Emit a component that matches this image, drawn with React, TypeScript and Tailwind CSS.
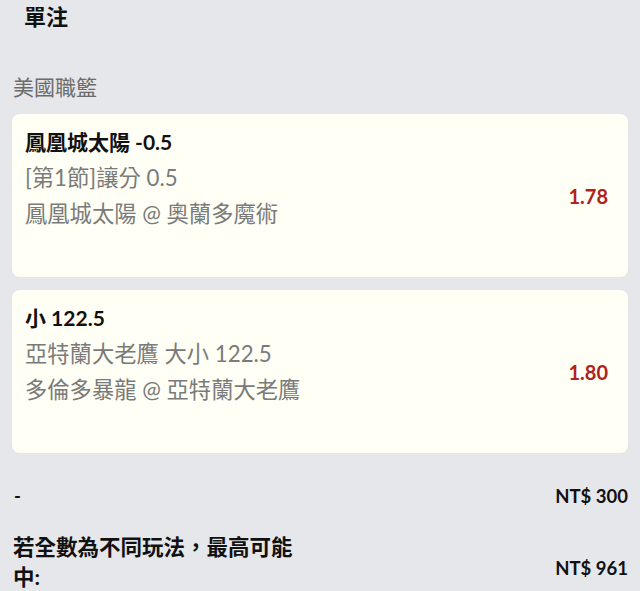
const bets = [
  {
    title: "鳳凰城太陽 -0.5",
    market: "[第1節]讓分 0.5",
    match: "鳳凰城太陽 @ 奧蘭多魔術",
    odds: "1.78",
  },
  {
    title: "小 122.5",
    market: "亞特蘭大老鷹 大小 122.5",
    match: "多倫多暴龍 @ 亞特蘭大老鷹",
    odds: "1.80",
  },
];

export default function App() {
  return (
    <div className="min-h-screen bg-[#e6e7ea] px-3 font-['Lato','Noto_Sans_CJK_TC',sans-serif] text-[#111]">
      <div className="h-[34px] pl-3 text-[22px] leading-[34px] font-bold">單注</div>

      <div className="mt-[35px] mb-[9px] pl-[1px] text-[21px] leading-[36px] text-[#6b6b6b]">美國職籃</div>

      <div className="flex flex-col gap-[13px]">
        {bets.map((b) => (
          <div
            key={b.title}
            className="flex h-[163px] items-center justify-between rounded-lg bg-[#fffff6] pl-[13px] pr-5"
          >
            <div className="self-start pt-[10px] leading-[36px]">
              <div className="text-[21px] font-bold text-[#111]">{b.title}</div>
              <div className="text-[22.3px] text-[#7a7a7a]">{b.market}</div>
              <div className="text-[22.3px] text-[#7a7a7a]">{b.match}</div>
            </div>
            <div className="text-[20px] font-bold text-[#b0211f]">{b.odds}</div>
          </div>
        ))}
      </div>

      <div className="mt-[28px] flex items-center justify-between pl-[2px] text-[18.5px] leading-[30px] font-bold">
        <span>-</span>
        <span>NT$ 300</span>
      </div>

      <div className="mt-[21px] flex items-center justify-between pl-[1px] font-bold">
        <div className="w-[290px] text-[21.5px] leading-[30px]">若全數為不同玩法，最高可能中:</div>
        <div className="mt-[11px] text-[18.5px] leading-[30px]">NT$ 961</div>
      </div>
    </div>
  );
}
